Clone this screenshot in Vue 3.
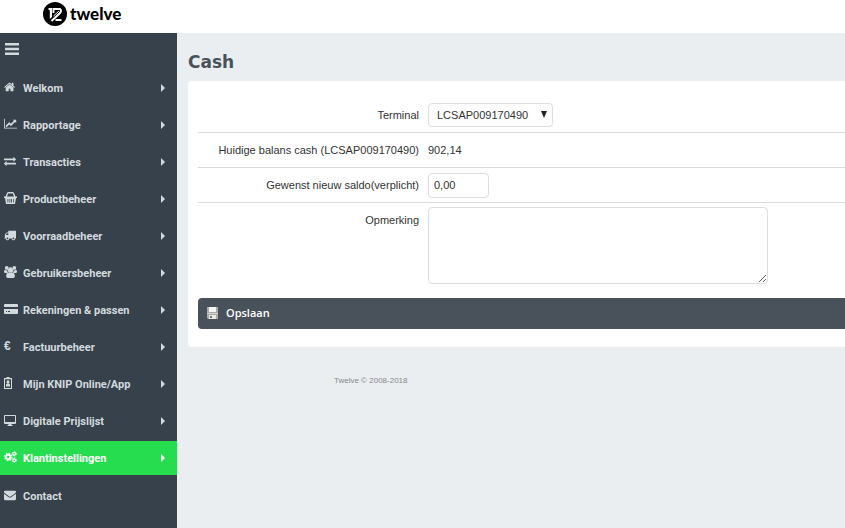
<script setup>
import { ref } from 'vue'

const wide = '0 0 2048 1792'
const base = '0 0 1792 1792'

const items = [
  { label: 'Welkom', box: '0 0 1792 1792', w: 12, d: 'M1408 992v480q0 26-19 45t-45 19h-384v-384h-256v384h-384q-26 0-45-19t-19-45v-480q0-1 .5-3t.5-3l575-474 575 474q1 2 1 6zm223-69l-62 74q-8 9-21 11h-3q-13 0-21-7l-692-577-692 577q-12 8-24 7-13-2-21-11l-62-74q-8-10-7-23.5t11-21.5l719-599q32-26 76-26t76 26l244 204v-195q0-14 9-23t23-9h192q14 0 23 9t9 23v408l219 182q10 8 11 21.5t-7 23.5z' },
  { label: 'Rapportage', box: wide, w: 13, d: 'M2048 1536v128h-2048v-1536h128v1408h1920zm-128-1248v435q0 21-19.5 29.5t-35.5-7.5l-121-121-633 633q-10 10-23 10t-23-10l-233-233-416 416-192-192 585-585q10-10 23-10t23 10l233 233 464-464-121-121q-16-16-7.5-35.5t29.5-19.5h435q14 0 23 9t9 23z' },
  { label: 'Transacties', box: base, w: 12, d: 'M1792 1184v192q0 13-9.500 22.500t-22.500 9.500h-1376v192q0 13-9.500 22.500t-22.500 9.500q-12 0-24-10l-319-320q-9-9-9-22 0-14 9-23l320-320q9-9 23-9 13 0 22.500 9.500t9.500 22.500v192h1376q13 0 22.500 9.500t9.500 22.500zm0-544q0 14-9 23l-320 320q-9 9-23 9-13 0-22.500-9.500t-9.500-22.500v-192h-1376q-13 0-22.500-9.500t-9.500-22.500v-192q0-13 9.500-22.500t22.500-9.500h1376v-192q0-14 9-23t23-9q12 0 24 10l319 319q9 9 9 23z' },
  { label: 'Productbeheer', box: '0 0 13 12', w: 13, d: 'M0 4.500H1.500L3 1Q3.500 0 4.500 0H8.500Q9.500 0 10 1L11.500 4.500H13V6H12L11 12H2L1 6H0zM3 4.500H10L8.800 1.500H4.200zM3.500 7V10.500H4.300V7zM5.500 7V10.500H6.300V7zM7.200 7V10.500H8V7zM9.100 7V10.500H9.800V7z' },
  { label: 'Voorraadbeheer', box: base, w: 12, d: 'M640 1408q0-52-38-90t-90-38-90 38-38 90 38 90 90 38 90-38 38-90zm-384-512h384v-256h-158q-13 0-22 9l-195 195q-9 9-9 22v30zm1280 512q0-52-38-90t-90-38-90 38-38 90 38 90 90 38 90-38 38-90zm256-1088v1024q0 15-4 26.500t-13.500 18.500-16.500 11.500-23.500 6-22.500 2-25.500 0-22.500-.5q0 106-75 181t-181 75-181-75-75-181h-384q0 106-75 181t-181 75-181-75-75-181h-64q-3 0-22.500.5t-25.500 0-22.500-2-23.500-6-16.500-11.500-13.500-18.500-4-26.500q0-26 19-45t45-19v-320q0-8-.5-35t0-38 2.500-34.500 6.500-37 14-30.500 22.500-30l198-198q19-19 50.500-32t58.500-13h160v-192q0-26 19-45t45-19h1024q26 0 45 19t19 45z' },
  { label: 'Gebruikersbeheer', box: '0 0 24 22', w: 13, d: 'M5 0a3.500 3.500 0 1 1 0 7a3.500 3.500 0 1 1 0-7zM19 0a3.500 3.500 0 1 1 0 7a3.500 3.500 0 1 1 0-7zM12 2.500a5 5 0 1 1 0 10a5 5 0 1 1 0-10zM2 7Q4.500 9 6.200 7.800Q6 11 7.800 12.800H2.500Q0 12.800 0 10.500Q0 7 2 7zM22 7Q19.500 9 17.800 7.800Q18 11 16.200 12.800H21.500Q24 12.800 24 10.500Q24 7 22 7zM7.500 12.200Q12 14 16.500 12.200Q20 13 20 19Q20 22 17 22H7Q4 22 4 19Q4 13 7.500 12.200z' },
  { label: 'Rekeningen & passen', box: '0 0 14 10', w: 14, d: 'M1 0H13Q14 0 14 1V3H0V1Q0 0 1 0zM0 5H14V9Q14 10 13 10H1Q0 10 0 9zM2 7V8H3V7zM4 7V8H6V7z' },
  { label: 'Factuurbeheer', euro: true },
  { label: 'Mijn KNIP Online/App', box: '0 0 8 12', w: 8, d: 'M0 1H2.500V0H5.500V1H8V12H0zM1 2.200V11H7V2.200zM4 3.200a1.500 1.500 0 1 1 0 3.200a1.500 1.500 0 1 1 0-3.200zM2 9.500V7.800Q2.300 6.500 4 6.500T6 7.800V9.500z' },
  { label: 'Digitale Prijslijst', box: '0 0 12 11', w: 12, d: 'M1 0H11Q12 0 12 1V8Q12 9 11 9H7.500V10H8.500V11H3.500V10H4.500V9H1Q0 9 0 8V1Q0 0 1 0zM1 1V7H11V1z' },
  { label: 'Klantinstellingen', active: true, gears: true },
  { label: 'Contact', leaf: true, box: base, w: 12, d: 'M1792 710v794q0 66-47 113t-113 47h-1472q-66 0-113-47t-47-113v-794q44 49 101 87 362 246 497 345 57 42 92.500 65.500t94.500 48 110 24.500h2q51 0 110-24.500t94.500-48 92.500-65.500q170-123 498-345 57-39 100-87zm0-294q0 79-49 151t-122 123q-376 261-468 325-10 7-42.500 31t-54 38.500-52 32.500-57.500 27-50 9h-2q-23 0-50-9t-57.500-27-52-32.500-54-38.500-42.500-31q-91-64-262-182.500t-205-142.500q-62-42-117-115.500t-55-136.500q0-78 41.500-130t118.500-52h1472q65 0 112.500 47t47.500 113z' }
]

const terminal = ref('LCSAP009170490')
const balance = ref('0,00')
const remark = ref('')
</script>

<template>
  <div class="page">
    <header class="top">
      <a class="brand" href="#" aria-label="twelve">
        <svg class="mark" viewBox="0 0 24 24" aria-hidden="true">
          <circle cx="12" cy="12" r="12" fill="#000" />
          <path d="M5.500 6H9V15L6.800 17V8H5.500z" fill="#fff" />
          <path d="M10.500 11V7H17Q19 8.500 17 11L8.500 19M12.500 18H18.500" fill="none" stroke="#fff" stroke-width="2" />
          <path d="M16 9L10.500 14" fill="none" stroke="#fff" stroke-width="1" />
        </svg>
        <span class="word">twelve</span>
      </a>
    </header>
    <div class="body">
      <nav class="side">
        <button class="burger" type="button" aria-label="Menu">
          <svg viewBox="0 0 14 12" width="14" height="12"><path d="M0 0H14V2.500H0zM0 4.750H14V7.250H0zM0 9.500H14V12H0z" fill="currentColor" /></svg>
        </button>
        <ul class="menu">
          <li v-for="item in items" :key="item.label">
            <a href="#" class="link" :class="{ active: item.active, leaf: item.leaf }">
              <span class="icon">
                <span v-if="item.euro" class="euro">€</span>
                <svg v-else-if="item.gears" viewBox="0 0 26 24" width="13" height="12" fill="none" stroke="currentColor">
                  <circle cx="8.500" cy="12" r="4.600" stroke-width="3.800" />
                  <circle cx="8.500" cy="12" r="7.400" stroke-width="2.400" stroke-dasharray="3 2.810" />
                  <circle cx="20.500" cy="5.500" r="2.800" stroke-width="2.400" />
                  <circle cx="20.500" cy="5.500" r="4.400" stroke-width="1.600" stroke-dasharray="2.300 2.300" />
                  <circle cx="20.500" cy="18.500" r="2.800" stroke-width="2.400" />
                  <circle cx="20.500" cy="18.500" r="4.400" stroke-width="1.600" stroke-dasharray="2.300 2.300" />
                </svg>
                <svg v-else :viewBox="item.box" :width="item.w"><path :d="item.d" fill="currentColor" fill-rule="evenodd" /></svg>
              </span>
              <span class="text">{{ item.label }}</span>
              <svg v-if="!item.leaf" class="caret" viewBox="0 0 4 8" width="4" height="8"><path d="M0 0L4 4L0 8z" fill="currentColor" /></svg>
            </a>
          </li>
        </ul>
      </nav>
      <main class="main">
        <h1>Cash</h1>
        <form class="card" @submit.prevent>
          <div class="row">
            <label class="label" for="terminal">Terminal</label>
            <div class="select">
              <select id="terminal" v-model="terminal"><option>LCSAP009170490</option></select>
              <svg viewBox="0 0 6 7" width="6" height="7" aria-hidden="true"><path d="M0 0H6L3 7z" fill="#222" /></svg>
            </div>
          </div>
          <div class="row">
            <span class="label">Huidige balans cash (LCSAP009170490)</span>
            <span>902,14</span>
          </div>
          <div class="row">
            <label class="label" for="balance">Gewenst nieuw saldo(verplicht)</label>
            <input id="balance" v-model="balance" class="field" type="text" required>
          </div>
          <div class="row tall">
            <label class="label" for="remark">Opmerking</label>
            <textarea id="remark" v-model="remark" class="field"></textarea>
          </div>
          <button class="save" type="submit">
            <svg viewBox="0 0 11 12" width="11" height="12" aria-hidden="true">
              <path d="M0 0H11V12H1L0 11z" fill="#aaa9a7" />
              <path d="M2 0H9V5H2z" fill="#f5f5f4" />
              <path d="M0 6H11V7H0z" fill="#d4d1ce" />
              <path d="M2 8H9V12H2z" fill="#e9e8e6" />
              <path d="M3 9H5V11H3z" fill="#77736f" />
            </svg>
            Opslaan
          </button>
        </form>
        <footer>Twelve © 2008-2018</footer>
      </main>
    </div>
  </div>
</template>

<style>
body { margin: 0; background: #eaeef1; }
</style>

<style scoped>
.page {
  display: flex;
  flex-direction: column;
  min-height: 100vh;
  font-family: "Liberation Sans", Arial, sans-serif;
  font-size: 11px;
  color: #333;
}
.top {
  display: flex;
  height: 33px;
  box-sizing: border-box;
  padding: 2px 43px;
  background: #fff;
}
.brand {
  display: flex;
  gap: 3px;
  height: 24px;
  align-items: center;
  color: #000;
  text-decoration: none;
}
.mark { width: 24px; height: 24px; }
.word { font: 900 17px/24px Lato, sans-serif; }
.body { display: flex; flex: 1; }
.side {
  flex: 0 0 177px;
  background: #37414b;
  color: #d3dade;
}
.burger {
  display: block;
  padding: 10px 5px 14px;
  border: 0;
  background: none;
  color: inherit;
  line-height: 0;
}
.menu {
  display: flex;
  flex-direction: column;
  gap: 3px;
  margin: 0;
  padding: 2px 0 15px;
  list-style: none;
}
.link {
  display: flex;
  align-items: center;
  height: 34px;
  padding: 0 12px 0 4px;
  color: inherit;
  font: bold 11px/16px Roboto, sans-serif;
  text-decoration: none;
}
.active { background: #26dd50; color: #fff; }
.leaf { height: 36px; }
.icon { display: flex; align-items: center; width: 19px; flex: none; padding-bottom: 2px; }
.euro { font: bold 12px/14px "Liberation Sans", sans-serif; }
.text { flex: 1; padding-top: 2px; white-space: nowrap; }
.main { flex: 1; min-width: 0; padding: 18px 0 0 11px; }
h1 {
  margin: 0 0 8px;
  font: bold 17px/22px "DejaVu Sans", Verdana, sans-serif;
  color: #48515a;
}
.card {
  padding: 17px 0 18px 10px;
  border-radius: 4px 0 0 4px;
  background: #fff;
}
.row {
  display: flex;
  align-items: center;
  gap: 9px;
  min-height: 34px;
  border-bottom: 1px solid #d9dbdd;
}
.label { flex: 0 0 221px; text-align: right; }
.tall { align-items: flex-start; padding: 4px 0 14px; border-bottom: 0; }
.tall .label { line-height: 26px; }
.select { position: relative; }
.select svg { position: absolute; right: 6px; top: 8px; pointer-events: none; }
select, .field {
  box-sizing: border-box;
  margin: 0;
  border: 1px solid #dcdfe1;
  border-radius: 4px;
  background: #fff;
  color: #333;
  font: inherit;
}
select { display: block; width: 125px; height: 24px; padding: 0 8px; appearance: none; }
input.field { width: 61px; height: 25px; padding: 0 5px; }
textarea.field { display: block; width: 340px; height: 77px; padding: 5px; resize: both; }
.save {
  display: flex;
  align-items: center;
  gap: 8px;
  width: 100%;
  height: 31px;
  padding: 0 9px 2px;
  border: 0;
  border-radius: 4px 0 0 4px;
  background: #49525a;
  color: #fff;
  font: 600 11px/16px "Open Sans", sans-serif;
}
footer {
  padding: 29px 0 16px 146px;
  color: #888;
  font: 8px/10px "Liberation Sans", sans-serif;
}
</style>
